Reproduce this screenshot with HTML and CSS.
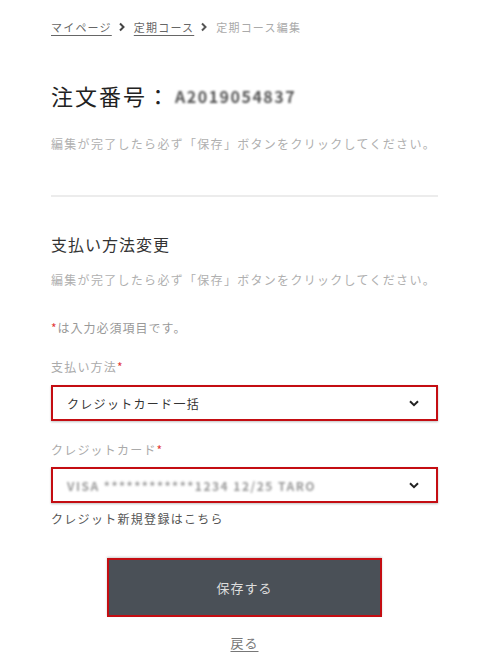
FILE: index.html
```html
<!DOCTYPE html>
<html lang="ja">
<head>
    <meta charset="UTF-8">
    <meta name="viewport" content="width=device-width, initial-scale=1.0">
    <title>定期コース編集</title>
    <link rel="stylesheet" href="styles.css">
</head>
<body>
    <div class="page">
        <nav class="breadcrumb">
            <a href="#">マイページ</a>
            <svg class="crumb-sep" width="8" height="10" viewBox="0 0 8 10"><path d="M2 1.5 L5.5 5 L2 8.5" fill="none" stroke="#444" stroke-width="2"/></svg>
            <a href="#">定期コース</a>
            <svg class="crumb-sep" width="8" height="10" viewBox="0 0 8 10"><path d="M2 1.5 L5.5 5 L2 8.5" fill="none" stroke="#555" stroke-width="2"/></svg>
            <span class="current">定期コース編集</span>
        </nav>

        <h1 class="order-title">注文番号：<span class="masked dark">A2019054837</span></h1>
        <p class="note">編集が完了したら必ず「保存」ボタンをクリックしてください。</p>

        <hr class="divider">

        <h2 class="section-title">支払い方法変更</h2>
        <p class="note note-tight">編集が完了したら必ず「保存」ボタンをクリックしてください。</p>

        <p class="required-note"><span class="req">*</span>は入力必須項目です。</p>

        <div class="form-group">
            <label class="field-label">支払い方法<span class="req">*</span></label>
            <div class="select">
                <span class="select-value">クレジットカード一括</span>
                <svg width="10" height="7" viewBox="0 0 10 7"><path d="M1 1.2 L5 5.2 L9 1.2" fill="none" stroke="#222" stroke-width="2"/></svg>
            </div>
        </div>

        <div class="form-group group-card">
            <label class="field-label">クレジットカード<span class="req">*</span></label>
            <div class="select">
                <span class="select-value masked light">VISA ************1234 12/25 TARO</span>
                <svg width="10" height="7" viewBox="0 0 10 7"><path d="M1 1.2 L5 5.2 L9 1.2" fill="none" stroke="#222" stroke-width="2"/></svg>
            </div>
            <a class="new-card" href="#">クレジット新規登録はこちら</a>
        </div>

        <div class="actions">
            <button type="button" class="save-btn">保存する</button>
            <a class="back-link" href="#">戻る</a>
        </div>
    </div>
</body>
</html>
```

FILE: styles.css
```css
body {
    margin: 0;
    background: #fff;
    font-family: "Noto Sans CJK JP", "Noto Sans", sans-serif;
    color: #333;
}
.page {
    width: 387px;
    margin-left: 51px;
    padding-top: 17px;
}
.breadcrumb {
    display: flex;
    align-items: center;
    height: 20px;
    font-size: 11px;
    letter-spacing: 1.2px;
}
.breadcrumb a {
    color: #666;
    text-decoration: underline;
    text-underline-offset: 3px;
}
.crumb-sep {
    margin: 0 8px 0 6px;
}
.breadcrumb .current {
    color: #aaa;
}
.order-title {
    margin: 42px 0 0;
    font-size: 22px;
    font-weight: 400;
    line-height: 32px;
    letter-spacing: 2px;
    color: #222;
}
.masked {
    display: inline-block;
    filter: blur(1.2px);
    font-weight: 700;
}
.masked.dark {
    font-size: 16px;
    letter-spacing: 1.5px;
    color: #555;
    vertical-align: 2px;
    margin-left: 4px;
}
.note {
    margin: 22px 0 0;
    font-size: 12px;
    line-height: 20px;
    letter-spacing: 1.3px;
    white-space: nowrap;
    color: #b0b0b0;
}
.divider {
    margin: 41px 0 0;
    border: none;
    border-top: 2px solid #ececec;
}
.section-title {
    margin: 35px 0 0;
    font-size: 16px;
    font-weight: 400;
    line-height: 24px;
    letter-spacing: 1px;
    color: #333;
}
.note-tight {
    margin-top: 14px;
}
.required-note {
    margin: 28px 0 0;
    font-size: 12px;
    line-height: 20px;
    letter-spacing: 1px;
    color: #999;
}
.req {
    color: #e23b3b;
}
.form-group {
    margin-top: 19px;
}
.field-label {
    display: block;
    font-size: 12px;
    line-height: 20px;
    letter-spacing: 1.2px;
    color: #aaa;
    margin-bottom: 8px;
}
.select {
    display: flex;
    align-items: center;
    justify-content: space-between;
    height: 32px;
    padding: 0 17px 0 14px;
    border: 2px solid #c40d12;
    box-shadow: 0 1px 2px rgba(0,0,0,0.25);
}
.select-value {
    font-size: 12px;
    letter-spacing: 1.3px;
    color: #333;
}
.masked.light {
    color: #999;
    font-size: 12px;
    letter-spacing: 1.5px;
    filter: blur(1.1px);
}
.group-card .field-label {
    margin-bottom: 7px;
}
.new-card {
    display: block;
    margin-top: 6px;
    font-size: 12px;
    line-height: 20px;
    letter-spacing: 1.3px;
    color: #555;
    text-decoration: none;
}
.actions {
    display: flex;
    flex-direction: column;
    align-items: center;
    margin-top: 29px;
}
.save-btn {
    width: 275px;
    height: 59px;
    background: #4a5057;
    border: 2px solid #c40d12;
    box-shadow: 0 -1px 2px rgba(0,0,0,0.2);
    color: #ddd;
    font-family: inherit;
    font-size: 13px;
    letter-spacing: 1px;
    cursor: pointer;
}
.back-link {
    margin-top: 16px;
    font-size: 13px;
    line-height: 20px;
    letter-spacing: 1px;
    color: #777;
    text-decoration: underline;
    text-underline-offset: 3px;
}
```
